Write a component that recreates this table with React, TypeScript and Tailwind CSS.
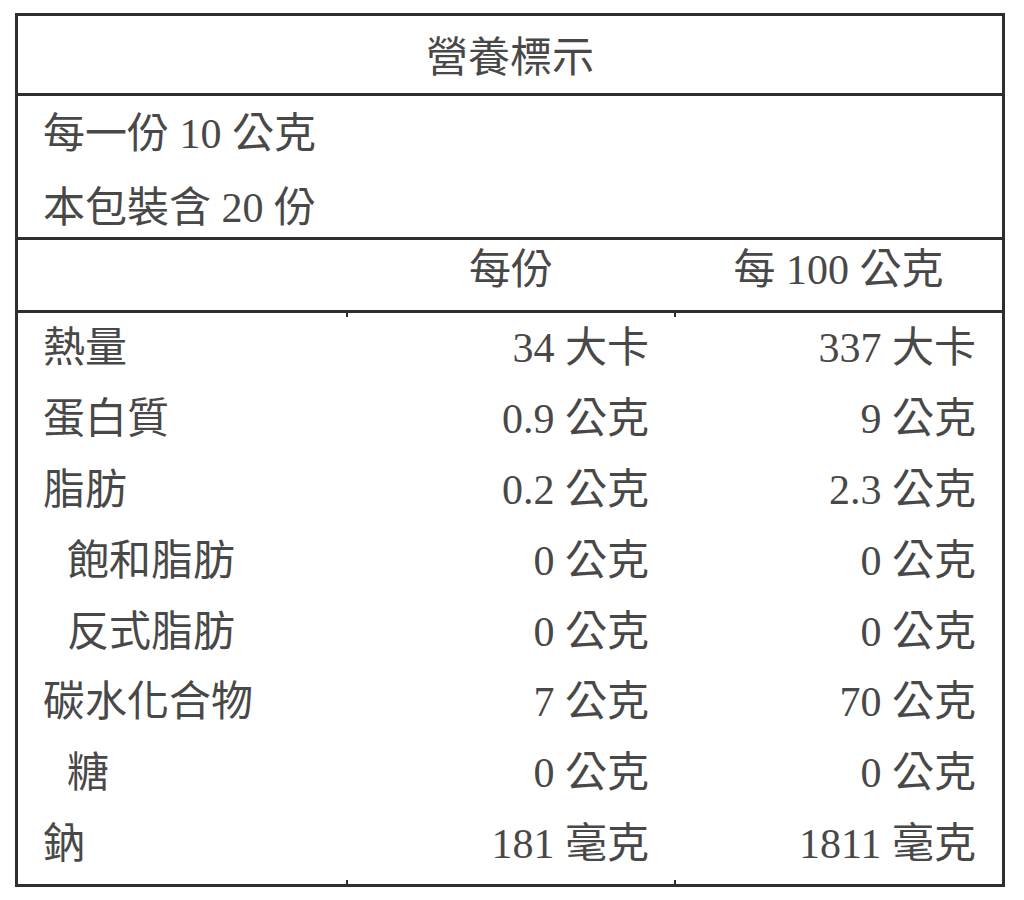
const font = {
  fontFamily: "'Liberation Serif', 'Noto Sans CJK TC', serif",
};

const rows = [
  { name: "熱量", indent: false, serving: "34 大卡", per100: "337 大卡" },
  { name: "蛋白質", indent: false, serving: "0.9 公克", per100: "9 公克" },
  { name: "脂肪", indent: false, serving: "0.2 公克", per100: "2.3 公克" },
  { name: "飽和脂肪", indent: true, serving: "0 公克", per100: "0 公克" },
  { name: "反式脂肪", indent: true, serving: "0 公克", per100: "0 公克" },
  { name: "碳水化合物", indent: false, serving: "7 公克", per100: "70 公克" },
  { name: "糖", indent: true, serving: "0 公克", per100: "0 公克" },
  { name: "鈉", indent: false, serving: "181 毫克", per100: "1811 毫克" },
];

export default function App() {
  return (
    <div className="min-h-[900px] w-[1024px] bg-white pt-[13px] pl-[15px]">
      <div
        className="flex w-[990px] flex-col border-[3px] border-[#2e2e2e] text-[42px] leading-none text-[#484848]"
        style={font}
      >
        <div className="flex h-[80px] items-center justify-center border-b-[3px] border-[#2e2e2e] pt-[6px]">
          營養標示
        </div>

        <div className="flex h-[144px] flex-col justify-center gap-[32px] border-b-[3px] border-[#2e2e2e] pl-[25px] pt-[8px]">
          <div>每一份 10 公克</div>
          <div>本包裝含 20 份</div>
        </div>

        <div className="grid h-[73px] grid-cols-[329px_328px_1fr] items-center border-b-[3px] border-[#2e2e2e] pb-[10px]">
          <div />
          <div className="text-center">每份</div>
          <div className="text-center">每 100 公克</div>
        </div>

        <div className="relative flex h-[571px] flex-col">
          <span className="absolute left-[328px] top-0 h-[4px] w-[2px] bg-[#2e2e2e]" />
          <span className="absolute left-[656px] top-0 h-[4px] w-[2px] bg-[#2e2e2e]" />
          <span className="absolute bottom-0 left-[328px] h-[4px] w-[2px] bg-[#2e2e2e]" />
          <span className="absolute bottom-0 left-[656px] h-[4px] w-[2px] bg-[#2e2e2e]" />
          {rows.map((r) => (
            <div
              key={r.name}
              className="grid h-[70.8px] grid-cols-[329px_328px_1fr] items-center"
            >
              <div className={r.indent ? "pl-[49px]" : "pl-[25px]"}>{r.name}</div>
              <div className="pr-[26px] text-right">{r.serving}</div>
              <div className="pr-[26px] text-right">{r.per100}</div>
            </div>
          ))}
        </div>
      </div>
    </div>
  );
}
